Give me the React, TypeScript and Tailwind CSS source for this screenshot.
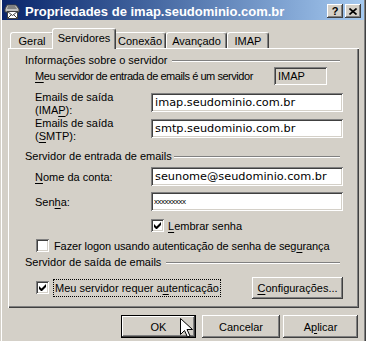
import type { ReactNode } from 'react';

// Win2000-style 3D edges, kept as full class strings so Tailwind picks them up.
const RAISED =
  'shadow-[inset_-1px_-1px_#404040,inset_1px_1px_#ffffff,inset_-2px_-2px_#808080,inset_2px_2px_#d4d0c8]';
const SUNKEN =
  'shadow-[inset_1px_1px_#808080,inset_-1px_-1px_#ffffff,inset_2px_2px_#404040,inset_-2px_-2px_#d4d0c8]';
const FIELD_FONT = "font-['DejaVu_Sans',sans-serif] text-[11.3px]";

function U({ children }: { children: ReactNode }) {
  return <span className="underline decoration-1 underline-offset-[2px]">{children}</span>;
}

function TitleBar() {
  return (
    <div className="mx-[2px] flex h-[20px] items-center bg-linear-to-r from-[#0a246a] to-[#a6caf0] pt-[2px] pl-[2px] pr-[3px]">
      <svg width="16" height="16" viewBox="0 0 16 16" className="shrink-0">
        <path d="M3 2h9l3 4v3H1V6z" fill="#c0c0c0" stroke="#404040" />
        <path d="M4 3h7l2 3H3z" fill="#808080" />
        <rect x="3.5" y="8.5" width="10" height="7" fill="#ffffff" stroke="#404040" />
        <path d="M3.5 8.5l5 4 5-4M3.5 15.5l4-4M13.5 15.5l-4-4" fill="none" stroke="#404040" />
      </svg>
      <span className="ml-[5px] font-['Liberation_Sans',sans-serif] text-[13px] font-bold leading-none text-white">
        Propriedades de imap.seudominio.com.br
      </span>
      <div className="ml-auto flex gap-[2px]">
        <div className={`flex h-[14px] w-[16px] items-center justify-center bg-[#d4d0c8] ${RAISED}`}>
          <span className="font-['Liberation_Sans',sans-serif] text-[11px] font-bold leading-none">?</span>
        </div>
        <div className={`flex h-[14px] w-[16px] items-center justify-center bg-[#d4d0c8] ${RAISED}`}>
          <svg width="8" height="7" viewBox="0 0 8 7">
            <path d="M0.5 0.5l7 6M7.5 0.5l-7 6" stroke="#000" strokeWidth="1.6" />
          </svg>
        </div>
      </div>
    </div>
  );
}

const TABS = [
  { label: 'Geral', w: 'w-[44px]' },
  { label: 'Servidores', w: 'w-[64px]', active: true },
  { label: 'Conexão', w: 'w-[52px]' },
  { label: 'Avançado', w: 'w-[61px]' },
  { label: 'IMAP', w: 'w-[42px]' },
];

function Tabs() {
  return (
    <div className="mt-[8px] flex h-[20px] items-end pl-[10px]">
      {TABS.map((t) =>
        t.active ? (
          <div
            key={t.label}
            className={`relative z-10 -mx-[2px] -mb-px flex h-[21px] ${t.w} justify-center rounded-t-[3px] border-t border-l border-r border-t-white border-l-white border-r-[#404040] bg-[#d4d0c8] pt-[3px] leading-[13px] shadow-[inset_-1px_0_#808080]`}
          >
            {t.label}
          </div>
        ) : (
          <div
            key={t.label}
            className={`flex h-[16px] ${t.w} justify-center rounded-t-[3px] border-t border-l border-r border-t-white border-l-white border-r-[#404040] bg-[#d4d0c8] pt-[2px] leading-[13px] shadow-[inset_-1px_0_#808080]`}
          >
            {t.label}
          </div>
        ),
      )}
    </div>
  );
}

function GroupHeader({ title, gap }: { title: string; gap: string }) {
  return (
    <div className="flex h-[13px] items-center pl-[17px] pr-[19px]">
      <span className="leading-[13px]">{title}</span>
      <div className={`${gap} h-[2px] flex-1 border-t border-b border-t-[#808080] border-b-white`} />
    </div>
  );
}

function Field({ value }: { value: string }) {
  return (
    <div className={`flex h-[19px] w-[192px] items-center bg-white pl-[4px] ${SUNKEN} ${FIELD_FONT}`}>
      {value}
    </div>
  );
}

function Checkbox({ checked }: { checked?: boolean }) {
  return (
    <div className={`flex h-[13px] w-[13px] shrink-0 items-center justify-center bg-white ${SUNKEN}`}>
      {checked && (
        <svg width="7" height="7" viewBox="0 0 7 7">
          <path d="M0 2v3l2 2h1l4-4V0L2.5 4.5z" fill="#000" />
        </svg>
      )}
    </div>
  );
}

function Panel() {
  return (
    <div className="relative z-0 ml-[8px] h-[260px] w-[351px] bg-[#d4d0c8] pt-[6px] shadow-[inset_1px_1px_#ffffff,inset_-1px_-1px_#404040,inset_-2px_-2px_#808080]">
      <GroupHeader title="Informações sobre o servidor" gap="ml-[5px]" />

      <div className="flex h-[18px] items-center pl-[27px]">
        <span className="w-[239px] whitespace-nowrap tracking-[-0.45px]">
          <U>M</U>eu servidor de entrada de emails é um servidor
        </span>
        <div className={`flex h-[18px] w-[53px] items-center bg-[#d4d0c8] pl-[4px] ${SUNKEN}`}>IMAP</div>
      </div>

      <div className="mt-[6px] flex h-[26px] pl-[27px]">
        <div className="w-[116px] leading-[13px]">
          Emails de saída
          <br />
          (IMA<U>P</U>):
        </div>
        <div className="mt-[2px]">
          <Field value="imap.seudominio.com.br" />
        </div>
      </div>

      <div className="flex h-[26px] pl-[27px]">
        <div className="w-[116px] leading-[13px]">
          Emails de saída
          <br />(<U>S</U>MTP):
        </div>
        <div className="mt-[2px]">
          <Field value="smtp.seudominio.com.br" />
        </div>
      </div>

      <div className="mt-[7px]">
        <GroupHeader title="Servidor de entrada de emails" gap="ml-[2px]" />
      </div>

      <div className="mt-[4px] flex h-[19px] items-center pl-[27px]">
        <span className="w-[116px]">
          <U>N</U>ome da conta:
        </span>
        <Field value="seunome@seudominio.com.br" />
      </div>

      <div className="mt-[6px] flex h-[19px] items-center pl-[27px]">
        <span className="w-[116px]">
          Sen<U>h</U>a:
        </span>
        <div className={`flex h-[19px] w-[192px] items-center bg-white pl-[3px] ${SUNKEN}`}>
          <span className="font-['Liberation_Sans',sans-serif] text-[8px] leading-none tracking-[-0.5px]">
            xxxxxxxxx
          </span>
        </div>
      </div>

      <div className="mt-[8px] flex h-[13px] items-center pl-[143px]">
        <Checkbox checked />
        <span className="ml-[4px]">
          <U>L</U>embrar senha
        </span>
      </div>

      <div className="mt-[7px] flex h-[13px] items-center pl-[28px]">
        <Checkbox />
        <span className="ml-[5px] whitespace-nowrap tracking-[-0.1px]">
          Fazer logon usando autenticação de senha de seg<U>u</U>rança
        </span>
      </div>

      <div className="mt-[4px]">
        <GroupHeader title="Servidor de saída de emails" gap="ml-[5px]" />
      </div>

      <div className="mt-[7px] flex h-[23px] items-center pl-[28px] pr-[16px]">
        <Checkbox checked />
        <span className="ml-[4px] whitespace-nowrap border border-dotted border-black px-px leading-[16px]">
          Meu servidor requer a<U>u</U>tenticação
        </span>
        <div className={`ml-auto flex h-[22px] w-[91px] items-center justify-center bg-[#d4d0c8] ${RAISED}`}>
          <span>
            <U>C</U>onfigurações...
          </span>
        </div>
      </div>
    </div>
  );
}

function Buttons() {
  return (
    <div className="mt-[7px] flex h-[23px]">
      <div className="ml-[121px] flex h-[23px] w-[75px] items-center justify-center border border-black bg-[#d4d0c8] shadow-[inset_-1px_-1px_#404040,inset_1px_1px_#ffffff,inset_-2px_-2px_#808080]">
        OK
      </div>
      <div className={`ml-[6px] flex h-[23px] w-[78px] items-center justify-center bg-[#d4d0c8] ${RAISED}`}>
        Cancelar
      </div>
      <div className={`ml-[3px] flex h-[23px] w-[75px] items-center justify-center bg-[#d4d0c8] ${RAISED}`}>
        A<U>p</U>licar
      </div>
    </div>
  );
}

function Cursor() {
  return (
    <svg width="13" height="20" viewBox="0 0 13 20" className="absolute left-[180px] top-[318px]">
      <path
        d="M0.5 0.5v16l4-4 3 6.5 2.5-1-3-6.5h5.5z"
        fill="#ffffff"
        stroke="#000000"
        strokeLinejoin="miter"
      />
    </svg>
  );
}

export default function App() {
  return (
    <div className="relative h-[341px] w-[366px] overflow-hidden bg-[#d4d0c8] font-['Liberation_Sans',sans-serif] text-[11px] leading-[14px] text-black shadow-[inset_1px_0_#d4d0c8,inset_2px_0_#ffffff,inset_-1px_0_#404040,inset_-2px_0_#808080]">
      <TitleBar />
      <Tabs />
      <Panel />
      <Buttons />
      <Cursor />
    </div>
  );
}
